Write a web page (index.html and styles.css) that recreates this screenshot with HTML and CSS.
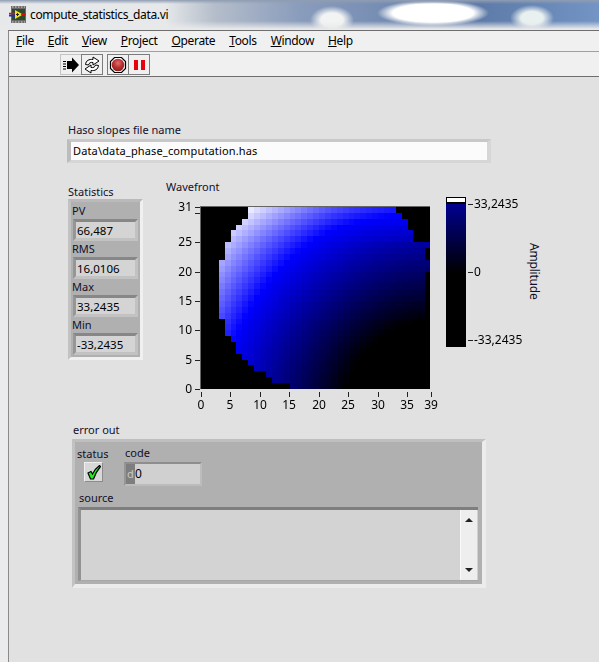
FILE: index.html
```html
<!DOCTYPE html>
<html lang="en">
  <head>
    <meta charset="UTF-8" />
    <title>compute_statistics_data.vi</title>
    <link rel="stylesheet" href="styles.css">
  </head>

  <body>
    <div class="titlebar">
      <svg class="vi-icon" width="18" height="18" viewBox="0 0 18 18">
        <rect x="2" y="0" width="15" height="17" fill="#6a6a6a" />
        <path d="M3 1 H16 M3 16 H16" stroke="#d8d8d8" stroke-width="1" stroke-dasharray="1.500 1.500" />
        <rect x="3" y="3" width="13" height="11" fill="#2f4a2a" />
        <path d="M6 4 L14 8.500 L6 13 Z" fill="#f2e018" />
        <path d="M7 8.500 H10 M8.500 7 V10" stroke="#222" stroke-width="1" />
        <path d="M0 9.500 H6" stroke="#1a2fd0" stroke-width="2" />
        <path d="M0 7.500 H6 M12 8.500 H17" stroke="#e01010" stroke-width="1.500" />
      </svg>
      <span class="title-text">compute_statistics_data.vi</span>
    </div>

    <div class="window">
      <ul class="menu">
        <li><u>F</u>ile</li>
        <li><u>E</u>dit</li>
        <li><u>V</u>iew</li>
        <li><u>P</u>roject</li>
        <li><u>O</u>perate</li>
        <li><u>T</u>ools</li>
        <li><u>W</u>indow</li>
        <li><u>H</u>elp</li>
      </ul>

      <div class="toolbar">
        <div class="tool-group">
          <div class="tool tool-run">
            <svg width="20" height="20" viewBox="0 0 20 20">
              <path d="M6 6 H11 V2.500 L18 10 L11 17.500 V14 H6 Z" fill="#000" />
              <path d="M2 6.500 H5 M2 9 H5 M2 11.500 H5 M2 14 H5" stroke="#000" stroke-width="1" />
            </svg>
          </div>
          <div class="tool">
            <svg width="20" height="20" viewBox="0 0 20 20" fill="#fff" stroke="#000" stroke-width="1">
              <path d="M3.500 9.500 C4 5.500 7 4 11 4.500 V2 L17 6 L11 10 V7.500 C8.500 7 7 8 6.500 10 Z" />
              <path d="M16.500 10.500 C16 14.500 13 16 9 15.500 V18 L3 14 L9 10 V12.500 C11.500 13 13 12 13.500 10 Z" />
            </svg>
          </div>
        </div>
        <div class="tool-group">
          <div class="tool">
            <svg width="20" height="20" viewBox="0 0 20 20">
              <defs>
                <radialGradient id="stopFill" cx="50%" cy="35%" r="65%">
                  <stop offset="0" stop-color="#e07070" />
                  <stop offset="0.55" stop-color="#b83030" />
                  <stop offset="1" stop-color="#8c2020" />
                </radialGradient>
              </defs>
              <path d="M6.500 2.500 H13.500 L17.500 6.500 V13.500 L13.500 17.500 H6.500 L2.500 13.500 V6.500 Z" fill="#fff" stroke="#000" stroke-width="1.200" />
              <circle cx="10" cy="10" r="6.300" fill="url(#stopFill)" />
            </svg>
          </div>
          <div class="tool">
            <svg width="20" height="20" viewBox="0 0 20 20">
              <path d="M5 5 H9 V15 H5 Z M12 5 H16 V15 H12 Z" fill="#e8000c" />
            </svg>
          </div>
        </div>
      </div>

      <div class="panel">
        <div class="file-control">
          <div class="label">Haso slopes file name</div>
          <div class="path-box">Data\data_phase_computation.has</div>
        </div>

        <div class="middle">
          <div class="stats-wrap">
            <div class="label">Statistics</div>
            <div class="cluster stats">
              <div class="stat-label">PV</div>
              <div class="numeric">66,487</div>
              <div class="stat-label">RMS</div>
              <div class="numeric">16,0106</div>
              <div class="stat-label">Max</div>
              <div class="numeric">33,2435</div>
              <div class="stat-label">Min</div>
              <div class="numeric">-33,2435</div>
            </div>
          </div>

          <div class="graph">
            <div class="label graph-title">Wavefront</div>
            <div class="graph-body">
              <div class="plot-area" id="plotArea">
                <canvas id="plot" width="229" height="182"></canvas>
              </div>
              <div class="ramp-wrap">
                <div class="ramp"><div class="ramp-top"></div><div class="ramp-fill"></div></div>
                <div class="ramp-scale">
                  <div class="ramp-tick ramp-hi">33,2435</div>
                  <div class="ramp-tick ramp-mid">0</div>
                  <div class="ramp-tick ramp-lo">-33,2435</div>
                </div>
                <div class="amp-label">Amplitude</div>
              </div>
            </div>
          </div>
        </div>

        <div class="error-control">
          <div class="label">error out</div>
          <div class="cluster error-box">
            <div class="error-top">
              <div class="status">
                <div class="label">status</div>
                <div class="check-btn">
                  <svg width="15" height="15" viewBox="0 0 15 15">
                    <path d="M2 8 L5 6.500 L6.500 9 C8 6 10 3 13.500 0.500 L14.500 1.500 C11.500 5 9 9.500 7.500 14 L4.500 14 Z" fill="#1ff01f" stroke="#000" stroke-width="1.200" />
                  </svg>
                </div>
              </div>
              <div class="code">
                <div class="label">code</div>
                <div class="code-box"><span class="radix">d</span><span>0</span></div>
              </div>
            </div>
            <div class="label source-label">source</div>
            <div class="source-box">
              <div class="scrollbar">
                <span class="arrow-up"></span>
                <span class="arrow-down"></span>
              </div>
            </div>
          </div>
        </div>
      </div>
    </div>

    <script src="plot.js"></script>
  </body>
</html>
```

FILE: styles.css
```css
* {
  box-sizing: border-box;
}
html,
body {
  margin: 0;
  height: 662px;
  overflow: hidden;
}
body {
  width: 599px;
  font-family: "Noto Sans", "Open Sans", sans-serif;
  font-size: 11px;
  line-height: 16px;
  color: #10102a;
  background: #e9ebec;
}

/* title bar, blurred desktop behind the glass */
.titlebar {
  height: 30px;
  display: flex;
  align-items: center;
  padding: 0 0 0 9px;
  background:
    linear-gradient(to bottom, #8f9db2 0, transparent 4px),
    linear-gradient(to bottom, transparent 21px, #e8e9ea 29px),
    radial-gradient(ellipse 22px 14px at 332px 20px, #f2f4f4 50%, transparent 100%),
    radial-gradient(ellipse 56px 13px at 433px 13px, #ffffff 72%, transparent 100%),
    radial-gradient(ellipse 22px 13px at 532px 18px, #e8f0f0 50%, transparent 100%),
    linear-gradient(to right, #e6e8ea 0, #e6e8ea 165px, #b4bdca 215px, #8a9cbc 300px, #5e7ba8 480px, #7394c4 599px);
}
.vi-icon {
  flex: none;
}
.title-text {
  margin-left: 3px;
  font-size: 12px;
  letter-spacing: -0.35px;
  color: #000;
}

.window {
  height: 632px;
  margin-left: 8px;
  border-left: 1px solid #8a8a8a;
  border-top: 1px solid #6e6e6e;
  display: flex;
  flex-direction: column;
}
.menu {
  list-style: none;
  margin: 0;
  padding: 0 0 0 7px;
  height: 21px;
  flex: none;
  display: flex;
  gap: 14px;
  align-items: center;
  font-size: 12px;
  letter-spacing: -0.35px;
  color: #000;
  background: #f0f0f0;
  border-bottom: 1px solid #a0a0a0;
}
.toolbar {
  height: 25px;
  flex: none;
  display: flex;
  gap: 4px;
  padding: 2px 0 0 51px;
  background: #f0f0f0;
  border-bottom: 1px solid #6e6e6e;
}
.tool-group {
  display: flex;
  height: 21px;
}
.tool {
  width: 22px;
  height: 21px;
  margin-right: -1px;
  border: 1px solid #7c7c7c;
  background: #f0f0f0;
}
.tool:last-child {
  margin-right: 0;
}
.tool-run {
  border-color: #c4c4c4;
  border-right-color: #7c7c7c;
}
.tool svg {
  display: block;
}

/* front panel */
.panel {
  flex: 1;
  background: #e1e1e1;
  padding: 45px 0 0 59px;
}
.label {
  white-space: nowrap;
}
.path-box {
  width: 424px;
  height: 24px;
  margin-top: 1px;
  margin-left: -1px;
  padding: 2px 0 0 2px;
  background: #fbfbfb;
  border-style: solid;
  border-width: 3px 4px;
  border-color: #c8c8c8 #d6d6d6 #d6d6d6 #bcbcbc;
  line-height: 14px;
  letter-spacing: 0.15px;
  color: #000;
}

.middle {
  display: flex;
  margin-top: 15px;
}
.stats-wrap {
  width: 98px;
  padding-top: 6px;
}
.cluster {
  background: #b0b0b0;
  border: 3px solid #f0f0f0;
  border-top-color: #bababa;
  border-left-color: #c2c2c2;
}
.stats {
  width: 75px;
  height: 161px;
  margin-top: -1px;
  padding: 1px 0 0 1px;
}
.stat-label {
  height: 16px;
  line-height: 16px;
}
.numeric {
  width: 65px;
  height: 22px;
  margin-left: 1px;
  padding: 1px 0 0 1px;
  background: #d4d4d4;
  border: 3px solid #c2c2c2;
  border-top-color: #878787;
  border-left-color: #969696;
  font-size: 11.500px;
  line-height: 15px;
  color: #000;
}

.graph-title {
  margin-top: 1px;
}
.graph-body {
  display: flex;
  margin-top: 3px;
}
.plot-area {
  position: relative;
  width: 264px;
  height: 215px;
  padding: 9px 0 0 35px;
}
.plot-area canvas {
  display: block;
}
.axis-frame {
  position: absolute;
  background: #666;
}
.tick {
  position: absolute;
  background: #222;
}
.tick-label {
  position: absolute;
  font-size: 12px;
  line-height: 14px;
  color: #000;
}
.tick-label.y {
  width: 24px;
  text-align: right;
}
.tick-label.x {
  width: 24px;
  text-align: center;
}

.ramp-wrap {
  display: flex;
  margin-left: 16px;
  margin-top: -1px;
}
.ramp {
  width: 20px;
  height: 150px;
  background: #000;
  display: flex;
  flex-direction: column;
}
.ramp-top {
  height: 4px;
  margin: 1px 1px 0;
  background: #fff;
  flex: none;
}
.ramp-fill {
  height: 70px;
  margin-top: 2px;
  flex: none;
  background: linear-gradient(to bottom, #000090, #00000a 92%, #000);
}
.ramp-scale {
  position: relative;
  width: 60px;
}
.ramp-tick {
  position: absolute;
  left: 8px;
  height: 14px;
  line-height: 14px;
  font-size: 12px;
  color: #000;
}
.ramp-tick::before {
  content: "";
  position: absolute;
  left: -6px;
  top: 7px;
  width: 5px;
  height: 1px;
  background: #222;
}
.ramp-hi {
  top: 0;
}
.ramp-mid {
  top: 68px;
}
.ramp-lo {
  top: 136px;
}
.amp-label {
  writing-mode: vertical-rl;
  padding-top: 46px;
  width: 16px;
  font-size: 12px;
  letter-spacing: -0.2px;
}

/* error cluster */
.error-control {
  margin-top: 9px;
  margin-left: 5px;
}
.error-control > .label {
  height: 17px;
}
.error-box {
  width: 414px;
  height: 149px;
  margin-left: -1px;
  padding: 4px 0 0 2px;
  border-width: 3px 4px 4px 3px;
  border-color: #bfbfbf #ececec #ececec #c2c2c2;
}
.error-top {
  display: flex;
  height: 41px;
}
.status {
  width: 48px;
}
.check-btn {
  width: 19px;
  height: 20px;
  margin: 0 0 0 7px;
  padding: 2px 0 0 1px;
  background: #d8d8d8;
  border: 1px solid #efefef;
  border-right-color: #8c8c8c;
  border-bottom-color: #8c8c8c;
}
.check-btn svg {
  display: block;
}
.code {
  margin-top: -1px;
}
.code-box {
  width: 78px;
  height: 24px;
  margin-top: 1px;
  margin-left: -1px;
  display: flex;
  align-items: center;
  background: #d0d0d0;
  border: 2px solid #bcbcbc;
  border-top-color: #8e8e8e;
  border-left-color: #969696;
  color: #000;
  font-size: 12px;
}
.radix {
  width: 9px;
  height: 100%;
  text-align: center;
  background: #7e7e7e;
  color: #c9c9c9;
  font-size: 11px;
  line-height: 20px;
}
.source-label {
  margin-top: 3px;
  padding-left: 2px;
}
.source-box {
  width: 400px;
  height: 74px;
  margin-left: 1px;
  margin-top: 1px;
  display: flex;
  justify-content: flex-end;
  background: #d3d3d3;
  border-style: solid;
  border-width: 3px 0 1px 3px;
  border-color: #7e7e7e #c0c0c0 #a8a8a8 #929292;
}
.scrollbar {
  width: 18px;
  height: 100%;
  display: flex;
  flex-direction: column;
  justify-content: space-between;
  align-items: center;
  padding: 8px 0;
  background: #eeeeee;
  border-left: 1px solid #fafafa;
  border-right: 1px solid #d0d0d0;
}
.arrow-up,
.arrow-down {
  width: 0;
  height: 0;
  border-left: 4px solid transparent;
  border-right: 4px solid transparent;
}
.arrow-up {
  border-bottom: 4px solid #222;
}
.arrow-down {
  border-top: 4px solid #222;
}
```

FILE: plot.js
```js
// wavefront intensity plot: 39 columns x 31 rows
const canvas = document.getElementById("plot");
const ctx = canvas.getContext("2d");
const area = document.getElementById("plotArea");

const W = 229;
const H = 182;
const CELL_W = 5.9;
const CELL_H = 5.87;

// first / last+1 column lit in each row, from the top
const lefts = [8, 8, 7, 6, 5, 5, 4, 4, 4, 3, 3, 3, 3, 3, 3, 3, 3, 3, 3, 4, 4, 4, 5, 6, 6, 7, 8, 9, 11, 12, 15];
const rights = [33, 34, 35, 35, 36, 36, 39, 38, 38, 39, 39];

function color(x, y) {
  let d = Math.hypot(x - 440, y - 420);
  if (y < 240) d += (240 - y) * 0.2 + Math.max(0, x - 330) * 0.09;
  if (d >= 220) {
    const c = Math.min(255, Math.round(((d - 220) / 75) * 255));
    return `rgb(${c},${c},255)`;
  }
  const b = Math.max(0, Math.round(((d - 100) / 120) * 255));
  return `rgb(0,0,${b})`;
}

ctx.fillStyle = "#000";
ctx.fillRect(0, 0, W, H);

for (let r = 0; r < lefts.length; r++) {
  const right = r < rights.length ? rights[r] : 38;
  for (let c = lefts[r]; c < right; c++) {
    const x0 = Math.round(c * CELL_W);
    const x1 = Math.round((c + 1) * CELL_W);
    const y0 = Math.round(r * CELL_H);
    const y1 = Math.round((r + 1) * CELL_H);
    ctx.fillStyle = color(201 + x0 + 3, 207 + y0 + 3);
    ctx.fillRect(x0, y0, x1 - x0, y1 - y0);
  }
}

// axes, placed relative to the plot area (canvas at 35,9)
function add(cls, left, top, width, height, text) {
  const el = document.createElement("div");
  el.className = cls;
  el.style.left = left + "px";
  el.style.top = top + "px";
  if (width) el.style.width = width + "px";
  if (height) el.style.height = height + "px";
  if (text !== undefined) el.textContent = text;
  area.appendChild(el);
}

add("axis-frame", 34, 8, 230, 1);
add("axis-frame", 34, 8, 1, 183);

const yTicks = [[31, 207], [30, 213], [25, 242], [20, 272], [15, 301], [10, 330], [5, 360], [0, 389]];
yTicks.forEach(([v, py]) => {
  const top = py - 198;
  add("tick", 29, top, 5, 1);
  if (v !== 30) add("tick-label y", 2, top - 7, 0, 0, v);
});

const xTicks = [0, 5, 10, 15, 20, 25, 30, 35, 39];
xTicks.forEach((v) => {
  const left = Math.round(35 + v * 5.885);
  add("tick", left, 194, 1, 5);
  add("tick-label x", left - 12, 200, 0, 0, v);
});
```
